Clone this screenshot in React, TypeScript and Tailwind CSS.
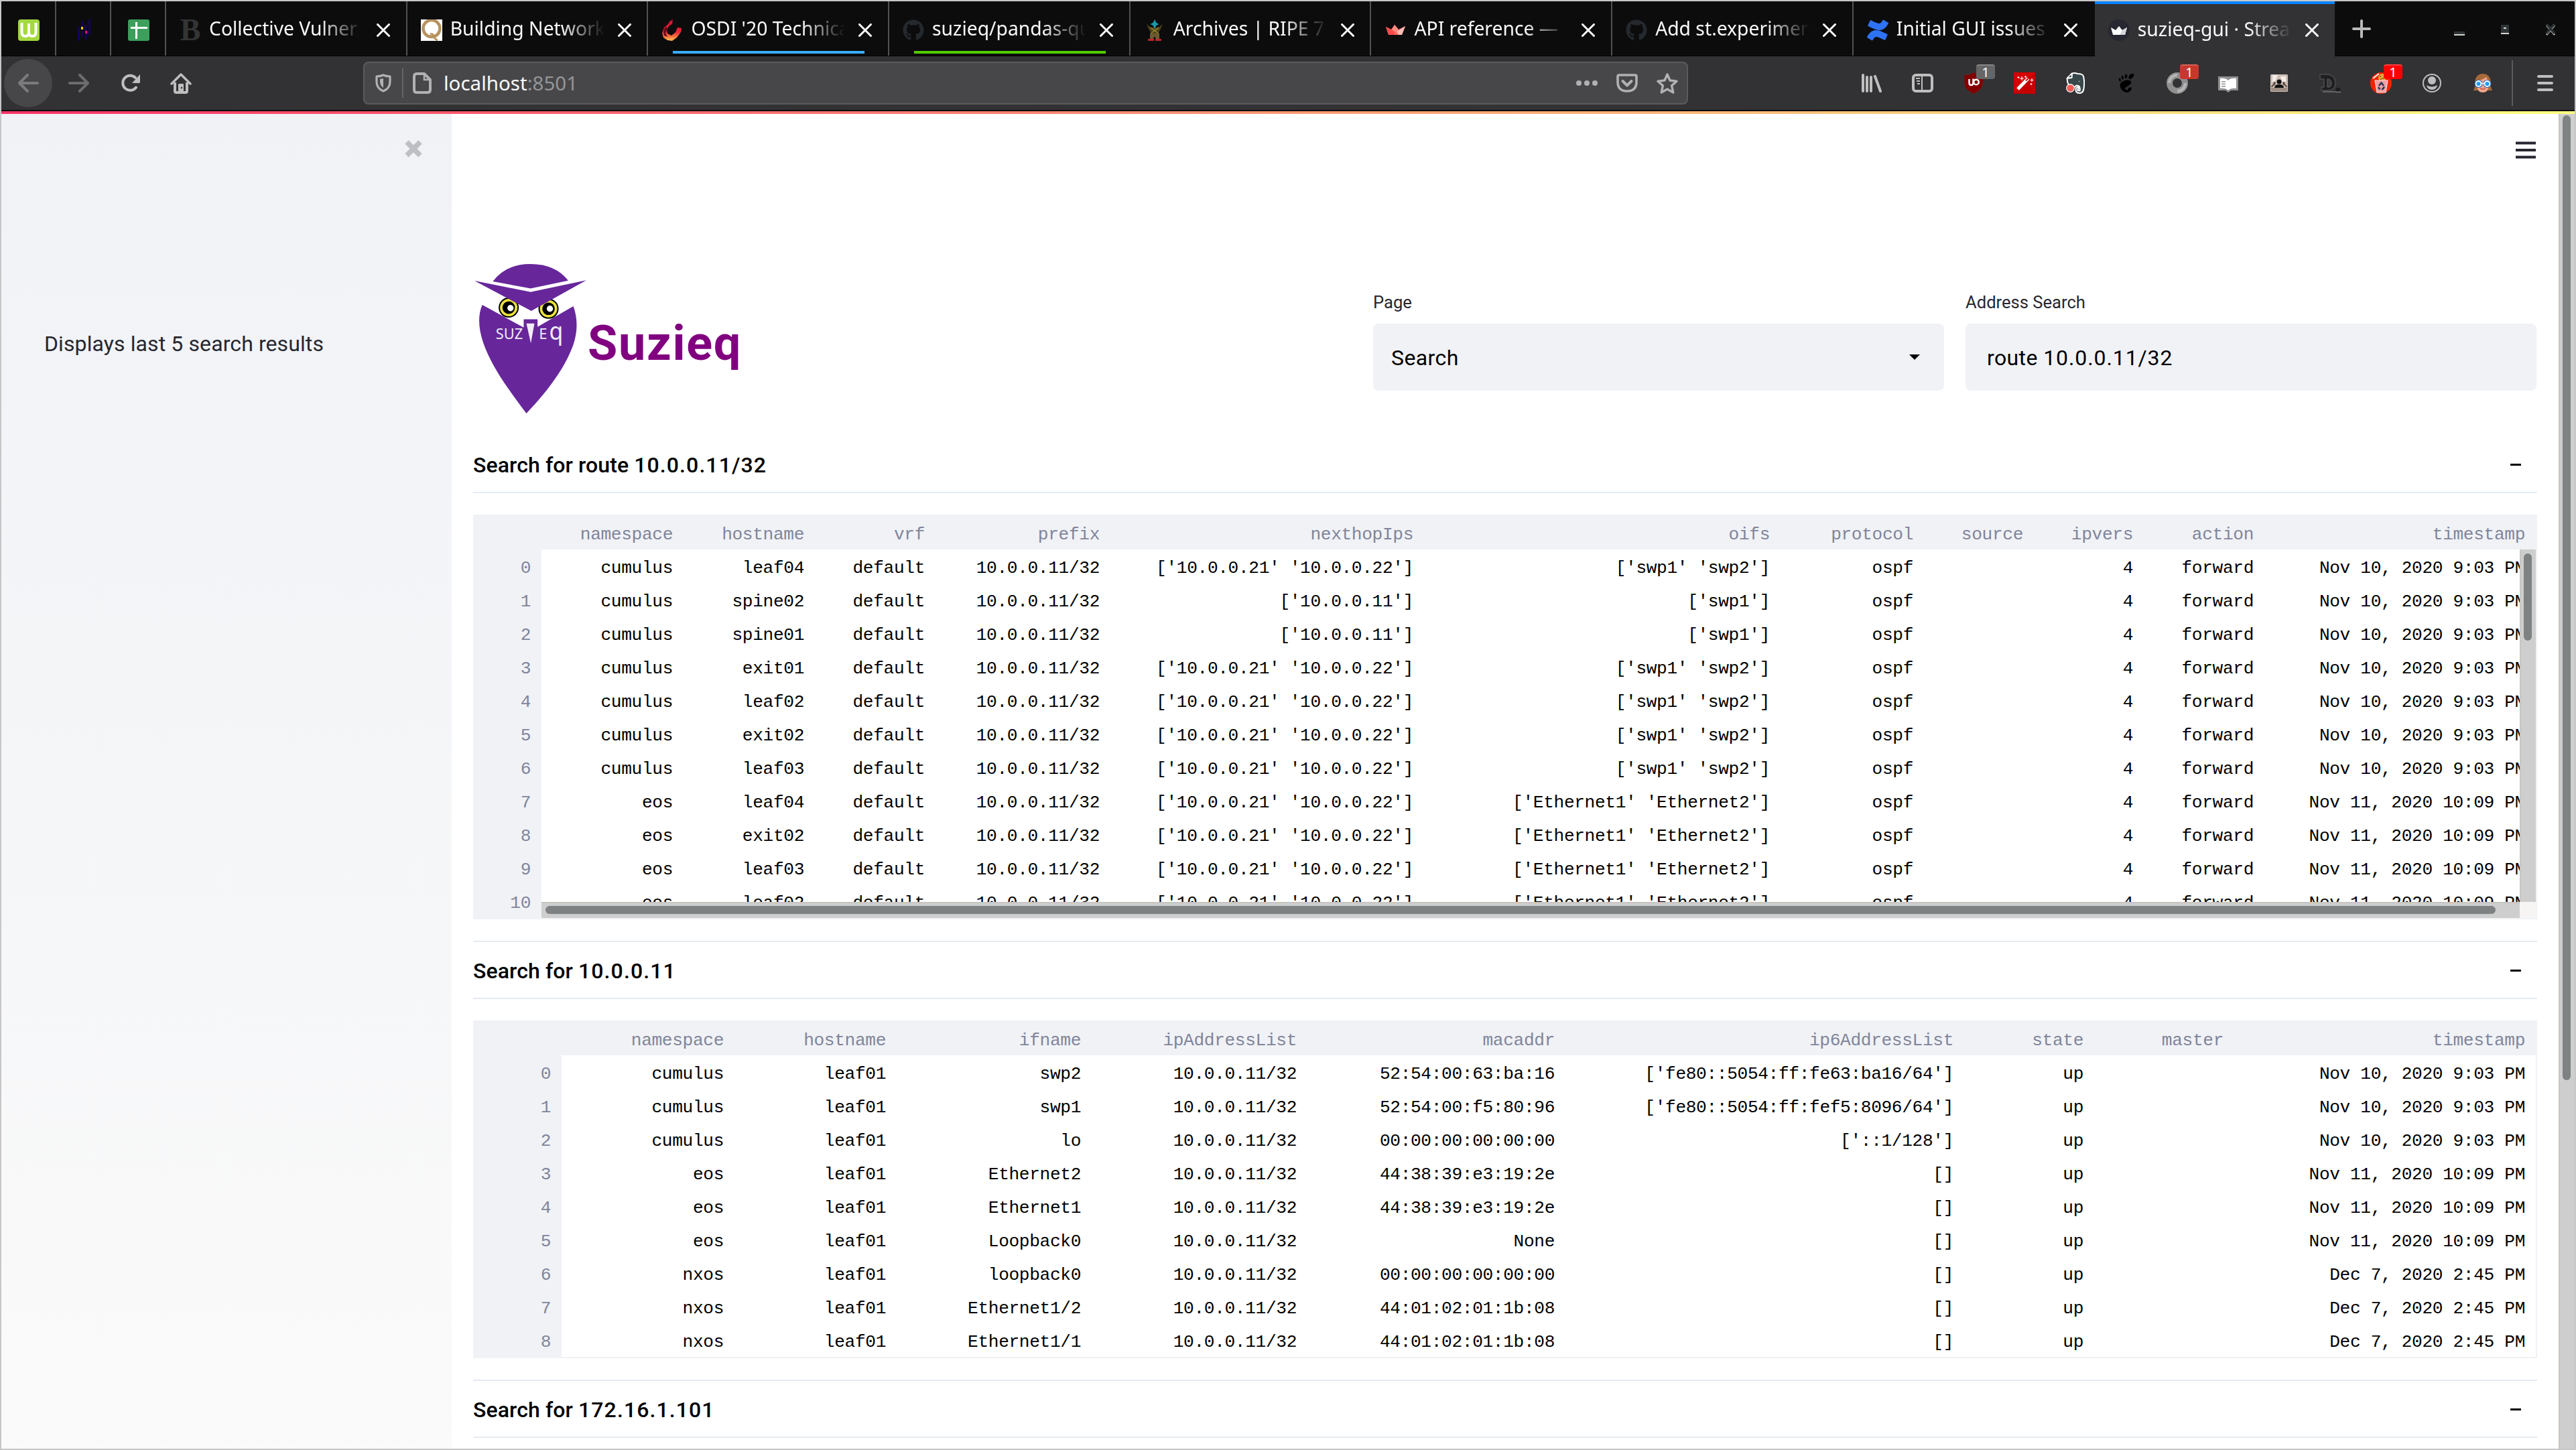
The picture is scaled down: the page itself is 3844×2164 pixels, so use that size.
import type { ReactNode } from "react";
import { FaGithub, FaConfluence } from "react-icons/fa";
import { SiGnome } from "react-icons/si";

/* ---------- favicons ---------- */

const Crown = ({ dark }: { dark?: boolean }) =>
  dark ? (
    <svg viewBox="0 0 32 32" className="size-8">
      <circle cx="16" cy="16" r="16" fill="#262730" />
      <path d="M4 12l7 4 5-6 5 6 7-4-3 11H7z" fill="#fff" />
      <path d="M21 16l7-4-3 11h-8z" fill="#d5d5da" />
    </svg>
  ) : (
    <svg viewBox="0 0 32 32" className="size-8">
      <path d="M2 11l8 4 5-7 6 7 10-5-5 13H6z" fill="#ff6b64" />
      <path d="M2 11l14 7-2 5H6z" fill="#ff4b4b" />
      <path d="M15 8l6 7-5 4-5-4z" fill="#ff8a80" />
      <path d="M31 10l-5 13h-5l-3-5z" fill="#ffbdb5" />
    </svg>
  );

const WikiIcon = () => (
  <svg viewBox="0 0 32 32" className="size-8">
    <rect width="32" height="32" rx="4" fill="#a4d93f" />
    <path d="M5.500 5v14q0 6 5.250 6T16 19V6M16 8v11q0 6 5.250 6t5.250-6V5" fill="none" stroke="#fff" strokeWidth="4" />
  </svg>
);

const PandasIcon = () => (
  <svg viewBox="0 0 32 32" className="size-8">
    <path d="M7 11h3v21H7zM12 2h3v9h-3zM12 17h3v9h-3zM17 8h3v9h-3zM18 21h3v9h-3zM23 0h3v23h-3z" fill="#150458" />
    <path d="M12 11h3v4h-3z" fill="#ffca00" />
    <path d="M18 17h3v4h-3z" fill="#e70488" />
  </svg>
);

const SheetsIcon = () => (
  <svg viewBox="0 0 32 32" className="size-8">
    <rect width="32" height="32" rx="3" fill="#3c9f5c" />
    <path d="M4 12.500h25M12.500 4v25" stroke="#fff" strokeWidth="3" />
  </svg>
);

const LetterB = () => (
  <span className="flex size-8 items-center justify-center font-['Liberation_Serif'] text-[46px] leading-8 font-bold text-[#343434]">B</span>
);

const QIcon = () => (
  <svg viewBox="0 0 32 32" className="size-8">
    <rect width="32" height="32" fill="#fff" />
    <circle cx="16" cy="13.500" r="12.500" fill="none" stroke="#b8935f" strokeWidth="4.500" />
    <path d="M14 22q4-1 5 3t6 6" fill="none" stroke="#b8935f" strokeWidth="3" />
  </svg>
);

const UsenixIcon = () => (
  <svg viewBox="0 0 32 32" className="size-8">
    <defs>
      <linearGradient id="flame" x1="0" y1="0" x2="0" y2="1">
        <stop offset="0" stopColor="#c8102e" />
        <stop offset=".6" stopColor="#ee2737" />
        <stop offset="1" stopColor="#ffc34d" />
      </linearGradient>
    </defs>
    <path d="M17 0l-5 3-2 4-6 5-3 8 2 7 6 4 7 1 7-5 6-8 1-6-6-1-3 7-6 5-6-3-1-6 4-6 4-2z" fill="url(#flame)" />
    <path d="M3 16l4-6 2 4-3 6 3 6-5-2z" fill="#6d0a18" />
  </svg>
);

const ArchiveIcon = () => (
  <svg viewBox="0 0 32 32" className="size-8">
    <path d="M4 7l6 5h12l6-5-4 9-4 6h-8l-4-6z" fill="#4f4419" />
    <path d="M10 12l6 5 6-5M10 21l6-4 6 4" stroke="#9a8434" strokeWidth="1.500" fill="none" />
    <path d="M16 0l2.500 5 4 2-4 2-2.500 5-2.500-5-4-2 4-2z" fill="#1b9aaa" />
    <path d="M9 21h14v8h-5l-2-4-2 4H9z" fill="#6e5a30" />
    <path d="M6 29h9v3H6zM17 29h9v3h-9z" fill="#b8252a" />
  </svg>
);

const GithubIcon = () => <FaGithub className="size-8 text-[#24292e]" />;
const ConfluenceIcon = () => <FaConfluence className="size-8 text-[#2e72f5]" />;

/* ---------- tab strip ---------- */

type TabInfo = { title: string; icon: ReactNode; line?: string };

const tabs: TabInfo[] = [
  { title: "Collective Vulner", icon: <LetterB /> },
  { title: "Building Network", icon: <QIcon /> },
  { title: "OSDI '20 Technica", icon: <UsenixIcon />, line: "bg-[#37adff]" },
  { title: "suzieq/pandas-qu", icon: <GithubIcon />, line: "bg-[#51cd00]" },
  { title: "Archives | RIPE 71", icon: <ArchiveIcon /> },
  { title: "API reference —", icon: <Crown /> },
  { title: "Add st.experimen", icon: <GithubIcon /> },
  { title: "Initial GUI issues -", icon: <ConfluenceIcon /> },
];

const CloseGlyph = () => (
  <svg viewBox="0 0 20 20" className="size-5 shrink-0">
    <path d="M1.500 1.500l17 17M18.500 1.500l-17 17" stroke="#f9f9fa" strokeWidth="3" strokeLinecap="round" />
  </svg>
);

function TabBody({ title, icon }: { title: string; icon: ReactNode }) {
  return (
    <div className="flex h-full items-center pt-1 pl-5">
      <span className="flex size-8 shrink-0 items-center">{icon}</span>
      <span className="mt-[-5px] ml-3 w-[230px] shrink-0 overflow-hidden text-[28.3px] leading-[44px] whitespace-nowrap text-[#f9f9fa] [mask-image:linear-gradient(to_right,black_72%,transparent_100%)]">
        {title}
      </span>
      <span className="ml-5 flex">
        <CloseGlyph />
      </span>
    </div>
  );
}

function TabStrip() {
  return (
    <div className="flex h-[82px] shrink-0 border-b border-black bg-[#0c0c0d] font-['Noto_Sans',sans-serif]">
      {[<WikiIcon key="w" />, <PandasIcon key="p" />, <SheetsIcon key="s" />].map((icon, i) => (
        <div key={i} className="flex w-[82px] items-center justify-center border-r-2 border-[#515154] pt-1 pl-px">
          {icon}
        </div>
      ))}
      {tabs.map((t, i) => (
        <div key={t.title} className={i === 7 ? "w-[360px]" : "w-[359.700px] border-r-2 border-[#515154]"}>
          <div className="relative h-full">
            <TabBody title={t.title} icon={t.icon} />
            {t.line && <div className={`absolute bottom-[3px] left-[37px] h-1 w-[286px] ${t.line}`} />}
          </div>
        </div>
      ))}
      <div className="h-[82px] w-[358px] border-t-4 border-[#0a84ff] bg-[#323234] pb-1">
        <TabBody title="suzieq-gui · Strea" icon={<Crown dark />} />
      </div>
      <svg viewBox="0 0 28 28" className="mt-[27px] ml-[26px] size-7">
        <path d="M14 2v24M2 14h24" stroke="#b9b9ba" strokeWidth="4" strokeLinecap="round" />
      </svg>
      <svg viewBox="0 0 16 6" className="mt-[45px] ml-[124px] h-1.5 w-4">
        <path d="M0 0h16v4H0z" fill="#2e3436" />
        <path d="M0 4h16v2H0z" fill="#d3d7cf" />
      </svg>
      <svg viewBox="0 0 12 14" className="mt-[35px] ml-[54px] h-[14px] w-3">
        <path d="M0 0h12v12H0z" fill="#2e3436" />
        <path d="M0 12h12v2H0zM4 4h4v2H4z" fill="#d3d7cf" />
      </svg>
      <svg viewBox="0 0 16 18" className="mt-[33px] ml-[54px] h-[18px] w-4">
        <path d="M2 3l12 14M14 3L2 17" stroke="#d3d7cf" strokeWidth="2.500" />
        <path d="M2 1l12 14M14 1L2 15" stroke="#2e3436" strokeWidth="3.500" />
      </svg>
    </div>
  );
}

/* ---------- toolbar ---------- */

const LibraryIcon = () => (
  <svg viewBox="0 0 30 28" className="h-7 w-[30px]">
    <path d="M2 2v24M8 5v21M14 5v21M20 4l8 22" stroke="#bebebf" strokeWidth="4" strokeLinecap="round" />
  </svg>
);

const SidebarIcon = () => (
  <svg viewBox="0 0 32 28" className="h-7 w-8">
    <rect x="2" y="2" width="28" height="24" rx="4" fill="none" stroke="#bebebf" strokeWidth="4" />
    <path d="M15 3v22" stroke="#bebebf" strokeWidth="2" />
    <path d="M6 7h6M7 11h5M8 15h4" stroke="#bebebf" strokeWidth="2" />
  </svg>
);

const UblockIcon = () => (
  <svg viewBox="0 0 28 32" className="h-8 w-7">
    <path d="M14 0q6 4 14 4v11q0 11-14 17Q0 26 0 15V4q8 0 14-4z" fill="#800000" stroke="#5d3434" strokeWidth=".6" />
    <path d="M7.500 10v5.500q0 3.500 3 3.500t3-3.500V9.500" fill="none" stroke="#fff" strokeWidth="2.500" />
    <circle cx="18" cy="14.500" r="3.800" fill="none" stroke="#fff" strokeWidth="2.500" />
  </svg>
);

const WandIcon = () => (
  <svg viewBox="0 0 32 32" className="size-8">
    <rect width="32" height="32" rx="1.500" fill="#c40000" />
    <path d="M0 0h32L0 32z" fill="#d60000" />
    <path d="M6 25L21.500 9" stroke="#fff" strokeWidth="5" />
    <path d="M18 12.500L21.500 9" stroke="#d00000" strokeWidth="2" />
    <path d="M12 6v6M9 9h6M17.500 5v3M16 6.500h3M27 9v5M24.500 11.500h5M7 6v3M5.500 7.500h3M26 16v3M24.500 17.500h3" stroke="#fff" strokeWidth="1.200" />
  </svg>
);

const EvernoteIcon = () => (
  <svg viewBox="0 0 28 32" className="h-8 w-7">
    <path
      d="M9 1.500q5-1 8 .5 8 0 9 4 2 8 .5 18-1 7-6 7-6 0-6-5 0-4 4-4v3q-1.500 0-1 2l3 .5q1-4-1-7l-4-1q-2 3-6 2.500Q2 21 1.500 9L8.500 8z"
      fill="#37474a"
      stroke="#fff"
      strokeWidth="2"
      strokeLinejoin="round"
    />
    <path d="M2 8l6.500-6.500V8z" fill="#37474a" stroke="#fff" strokeWidth="1.500" strokeLinejoin="round" />
    <path d="M18 13.500q1.500-1.500 3.500 0z" fill="#fff" />
    <circle cx="6.500" cy="23.500" r="5.800" fill="#f25c54" stroke="#fff" strokeWidth="1.200" />
  </svg>
);

const RingIcon = () => (
  <svg viewBox="0 0 32 32" className="size-8">
    <circle cx="16" cy="16" r="11.500" fill="none" stroke="#8f8f8f" strokeWidth="9" />
    <path d="M4 16a12 12 0 0 1 12-12M28 16a12 12 0 0 1-12 12" fill="none" stroke="#b4b4b4" strokeWidth="4" />
  </svg>
);

const BookIcon = () => (
  <svg viewBox="0 0 32 26" className="mt-1 h-[26px] w-8">
    <path d="M1 1h30v21H20l-4 3-4-3H1z" fill="#8f8f8f" />
    <path d="M4 4q8-1 12 3 4-4 12-3v15q-8-1-12 3-4-4-12-3z" fill="#fff" />
    <path d="M6 9h6M6 12.500h6M6 16h6" stroke="#8f8f8f" strokeWidth="1.500" />
  </svg>
);

const PeopleIcon = () => (
  <svg viewBox="0 0 26 26" className="size-[26px]">
    <rect width="26" height="26" rx="1.500" fill="#cdbfb6" />
    <path d="M3 1h8l-3 8-5 3zM15 3h8v8h-5z" fill="#f2ece7" />
    <path d="M1 20h24v5H1z" fill="#9d8c82" />
    <circle cx="13" cy="11" r="3.500" fill="#111" />
    <path d="M6 20q0-5 7-5t7 5z" fill="#111" />
    <circle cx="6" cy="13" r="1.800" fill="#55453c" />
    <circle cx="20" cy="13" r="1.800" fill="#55453c" />
    <path d="M2 19q1-4 5-4M24 19q-1-4-5-4" stroke="#55453c" strokeWidth="2" fill="none" />
  </svg>
);

const DisconnectIcon = () => (
  <svg viewBox="0 0 32 30" className="h-[30px] w-8">
    <path d="M1 2h9q14 0 14 13 0 11-12 11H3v-5h4V9H1z" fill="#1f1f20" stroke="#4c4c4e" strokeWidth="1.500" />
    <path d="M12 9q6 0 6 6.500T12 21z" fill="#3c3c3e" stroke="#606062" />
    <path d="M25 22h6v5h-6z" fill="#1d1d1e" />
    <path d="M5 28h20M25 28.500h7" stroke="#77777a" strokeWidth="1.500" />
  </svg>
);

const CookieBinIcon = () => (
  <svg viewBox="0 0 32 32" className="size-8">
    <circle cx="16" cy="16" r="16" fill="#f52200" />
    <path d="M4 9l9-7" stroke="#fff" strokeWidth="2" />
    <circle cx="18" cy="8" r="6" fill="#e2a93a" />
    <path d="M14 6h2M18 9h2M20 5h2M15 10h2" stroke="#7a4a12" strokeWidth="1.500" />
    <path d="M7 12h19l-3 18H10z" fill="#f3a0a0" stroke="#fbd9d9" strokeWidth="1.200" />
    <path d="M13 20l3.500-4.500L20 20M21 21.500L18.500 25H17M12 22l2.500 3.500" fill="none" stroke="#23395b" strokeWidth="2.500" />
  </svg>
);

const AccountIcon = () => (
  <svg viewBox="0 0 28 28" className="size-7">
    <circle cx="14" cy="14" r="13" fill="none" stroke="#bebebf" strokeWidth="2" />
    <circle cx="14" cy="10" r="6" fill="#bebebf" />
    <path d="M6 17q8 5 16 0-1 7-8 7t-8-7z" fill="#bebebf" />
  </svg>
);

const FaceIcon = () => (
  <svg viewBox="0 0 28 28" className="size-7">
    <path d="M0 25q3-5 2-13Q4 0 14 0t12 12q-1 8 2 13z" fill="#a86a3a" />
    <path d="M5 10q8 0 14-5 2 4 4 5v8q-1 10-9 10T5 18z" fill="#f0a58c" />
    <path d="M10 22q4 2 8 0" stroke="#c4574f" strokeWidth="1.500" fill="none" />
    <circle cx="7.500" cy="15" r="6" fill="#1560b8" />
    <circle cx="20.500" cy="15" r="6" fill="#1560b8" />
    <circle cx="7.500" cy="15" r="4" fill="#1e9bff" stroke="#fff" strokeWidth="1.800" />
    <circle cx="20.500" cy="15" r="4" fill="#1e9bff" stroke="#fff" strokeWidth="1.800" />
    <path d="M12 14.500h4" stroke="#fff" strokeWidth="1.500" />
  </svg>
);

const extensions: { icon: ReactNode; badge?: string }[] = [
  { icon: <LibraryIcon /> },
  { icon: <SidebarIcon /> },
  { icon: <UblockIcon />, badge: "bg-[#666666] border-t-[#858585]" },
  { icon: <WandIcon /> },
  { icon: <EvernoteIcon /> },
  { icon: <SiGnome className="size-7 text-black" /> },
  { icon: <RingIcon />, badge: "bg-[#c8372b] border-t-[#d55f55]" },
  { icon: <BookIcon /> },
  { icon: <PeopleIcon /> },
  { icon: <DisconnectIcon /> },
  { icon: <CookieBinIcon />, badge: "bg-[#ff0000] border-t-[#ff4040]" },
  { icon: <AccountIcon /> },
  { icon: <FaceIcon /> },
];

function Toolbar() {
  return (
    <div className="flex h-20 shrink-0 items-center bg-[#323234] font-['Noto_Sans',sans-serif]">
      <div className="ml-1 flex size-[72px] shrink-0 items-center justify-center rounded-full bg-[#474749]">
        <svg viewBox="0 0 32 28" className="h-7 w-8">
          <path d="M15 2L3 14l12 12M3 14h27" fill="none" stroke="#7b7b7d" strokeWidth="4" strokeLinecap="round" strokeLinejoin="round" />
        </svg>
      </div>
      <svg viewBox="0 0 32 28" className="ml-6 h-7 w-8 shrink-0">
        <path d="M17 2l12 12-12 12M29 14H2" fill="none" stroke="#6c6c6e" strokeWidth="4" strokeLinecap="round" strokeLinejoin="round" />
      </svg>
      <svg viewBox="0 0 30 28" className="ml-[46px] h-7 w-[30px] shrink-0">
        <path d="M22 20.500A11 11 0 1 1 21 6" transform="translate(1 0)" fill="none" stroke="#bebebf" strokeWidth="4" strokeLinecap="round" />
        <path d="M29 1v11.500q0 1.500-1.500 1.500H17z" fill="#bebebf" />
      </svg>
      <svg viewBox="0 0 32 32" className="ml-[44px] size-8 shrink-0">
        <path d="M2 17L16 3l14 14" fill="none" stroke="#bebebf" strokeWidth="3.500" strokeLinecap="round" strokeLinejoin="round" />
        <path d="M7 15v13q0 2 2 2h14q2 0 2-2V15" fill="none" stroke="#bebebf" strokeWidth="4" />
        <path d="M12 18q0-1 1-1h6q1 0 1 1v12h-8z" fill="#bebebf" />
        <circle cx="17" cy="23" r="1.300" fill="#323234" />
      </svg>

      <div className="ml-[256px] flex h-16 w-[1977px] shrink-0 items-center rounded-lg border-2 border-[#5b5b5d] bg-[#474749]">
        <svg viewBox="0 0 24 28" className="ml-4 h-7 w-6">
          <path d="M12 2q4 2 10 2v8q0 10-10 14Q2 22 2 12V4q6 0 10-2z" fill="none" stroke="#b1b1b3" strokeWidth="3.200" strokeLinejoin="round" />
          <path d="M12 7v14q-5-3-5-10V8z" fill="#b1b1b3" />
        </svg>
        <div className="ml-[16px] h-11 w-0.5 bg-[#66666a]" />
        <svg viewBox="0 0 28 32" className="ml-[14px] h-8 w-7">
          <path d="M6 2h11l9 9v15q0 4-4 4H6q-4 0-4-4V6q0-4 4-4z" fill="none" stroke="#b1b1b3" strokeWidth="4" strokeLinejoin="round" />
          <path d="M17 3v8h8" fill="none" stroke="#b1b1b3" strokeWidth="2.500" />
        </svg>
        <span className="ml-[18px] text-[29.500px] leading-[44px] text-[#f9f9fa]">
          localhost<span className="text-[#959596]">:8501</span>
        </span>
        <svg viewBox="0 0 32 8" className="ml-auto h-2 w-8">
          <circle cx="4" cy="4" r="4" fill="#b1b1b3" />
          <circle cx="16" cy="4" r="4" fill="#b1b1b3" />
          <circle cx="28" cy="4" r="4" fill="#b1b1b3" />
        </svg>
        <svg viewBox="0 0 32 28" className="ml-7 h-7 w-8">
          <path d="M4 2h24q2 0 2 2v8q0 14-14 14T2 12V4q0-2 2-2z" fill="none" stroke="#b1b1b3" strokeWidth="3.600" />
          <path d="M9.500 11l6.500 6.500 6.500-6.500" fill="none" stroke="#b1b1b3" strokeWidth="4" strokeLinecap="round" strokeLinejoin="round" />
        </svg>
        <svg viewBox="0 0 32 32" className="mr-[13px] ml-7 size-8">
          <path d="M16 3l4 9 10 1.200-7.400 6.600L24.800 30 16 25l-8.800 5 2.200-10.200L2 13.200 12 12z" fill="none" stroke="#b1b1b3" strokeWidth="3.400" strokeLinejoin="round" />
        </svg>
      </div>

      <div className="ml-[236px] flex h-full">
        {extensions.map((e, i) => (
          <div key={i} className="relative flex h-full w-[76px] items-center justify-center">
            {e.icon}
            {e.badge && (
              <span className={`absolute top-3 left-[42px] flex h-[22px] w-7 items-center justify-center rounded-[4px] border-t-2 text-[20px] leading-[20px] text-white ${e.badge}`}>
                1
              </span>
            )}
          </div>
        ))}
      </div>
      <div className="ml-[5px] h-[68px] w-0.5 bg-[#5b5b5d]" />
      <svg viewBox="0 0 24 24" className="ml-9 size-6">
        <path d="M2 2h20M2 12h20M2 22h20" stroke="#bebebf" strokeWidth="4" strokeLinecap="round" />
      </svg>
    </div>
  );
}

/* ---------- page content ---------- */

const Owl = () => (
  <svg viewBox="86 72 500 668" className="h-[223px] w-[167px]">
    <path d="M168 150Q225 72 336 72t169 74L337 181z" fill="#67279b" />
    <g>
      <circle cx="239" cy="267" r="42" fill="#ece33a" stroke="#000" strokeWidth="6" />
      <circle cx="239" cy="267" r="28" fill="#000" />
      <circle cx="247" cy="269" r="14" fill="#fff" />
      <circle cx="417" cy="272" r="42" fill="#ece33a" stroke="#000" strokeWidth="6" />
      <circle cx="417" cy="272" r="28" fill="#000" />
      <circle cx="423" cy="272" r="14" fill="#fff" />
    </g>
    <path d="M86 147L337 197 586 145 340 282z" fill="#67279b" />
    <path d="M121 255L306 356V319H368V353L528 261C550 322 548 388 518 458C478 555 400 655 318 740C240 635 176 550 135 450C104 375 98 305 121 255z" fill="#67279b" />
    <path d="M318 338h36l-16 88z" fill="#f2edf7" />
    <text x="181" y="408" fontSize="66" fill="#f2edf7" fontFamily="Noto Sans" textLength="121" lengthAdjust="spacingAndGlyphs">SUZ</text>
    <text x="374" y="408" fontSize="66" fill="#f2edf7" fontFamily="Noto Sans">E</text>
    <text x="420" y="412" fontSize="108" fill="#f2edf7" fontFamily="Noto Sans" textLength="62" lengthAdjust="spacingAndGlyphs">q</text>
  </svg>
);

const GRID1 = "grid-cols-[102px_212px_196px_180px_261px_468px_532px_214px_164px_164px_180px_405px]";
const GRID2 = "grid-cols-[132px_258px_242px_291px_322px_385px_595px_194px_209px_450px]";

const head1 = ["namespace", "hostname", "vrf", "prefix", "nexthopIps", "oifs", "protocol", "source", "ipvers", "action", "timestamp"];
const both = "['10.0.0.21' '10.0.0.22']";
const route = (ns: string, host: string, hops: string, oifs: string, ts: string) => [
  ns, host, "default", "10.0.0.11/32", hops, oifs, "ospf", "", "4", "forward", ts,
];
const T1 = "Nov 10, 2020 9:03 PM";
const T2 = "Nov 11, 2020 10:09 PM";
const T3 = "Dec 7, 2020 2:45 PM";
const swp = "['swp1' 'swp2']";
const eth = "['Ethernet1' 'Ethernet2']";
const rows1 = [
  route("cumulus", "leaf04", both, swp, T1),
  route("cumulus", "spine02", "['10.0.0.11']", "['swp1']", T1),
  route("cumulus", "spine01", "['10.0.0.11']", "['swp1']", T1),
  route("cumulus", "exit01", both, swp, T1),
  route("cumulus", "leaf02", both, swp, T1),
  route("cumulus", "exit02", both, swp, T1),
  route("cumulus", "leaf03", both, swp, T1),
  route("eos", "leaf04", both, eth, T2),
  route("eos", "exit02", both, eth, T2),
  route("eos", "leaf03", both, eth, T2),
  route("eos", "leaf02", both, eth, T2),
];

const head2 = ["namespace", "hostname", "ifname", "ipAddressList", "macaddr", "ip6AddressList", "state", "master", "timestamp"];
const addr = (ns: string, ifname: string, mac: string, ip6: string, ts: string) => [
  ns, "leaf01", ifname, "10.0.0.11/32", mac, ip6, "up", "", ts,
];
const rows2 = [
  addr("cumulus", "swp2", "52:54:00:63:ba:16", "['fe80::5054:ff:fe63:ba16/64']", T1),
  addr("cumulus", "swp1", "52:54:00:f5:80:96", "['fe80::5054:ff:fef5:8096/64']", T1),
  addr("cumulus", "lo", "00:00:00:00:00:00", "['::1/128']", T1),
  addr("eos", "Ethernet2", "44:38:39:e3:19:2e", "[]", T2),
  addr("eos", "Ethernet1", "44:38:39:e3:19:2e", "[]", T2),
  addr("eos", "Loopback0", "None", "[]", T2),
  addr("nxos", "loopback0", "00:00:00:00:00:00", "[]", T3),
  addr("nxos", "Ethernet1/2", "44:01:02:01:1b:08", "[]", T3),
  addr("nxos", "Ethernet1/1", "44:01:02:01:1b:08", "[]", T3),
];

const cell = "h-[50px] pr-4 text-right leading-[56px] whitespace-pre";

function Rows({ grid, head, rows }: { grid: string; head: string[]; rows: string[][] }) {
  return (
    <>
      <div className={`grid shrink-0 bg-[#f0f2f6] pt-0.5 text-[#81859a] ${grid}`}>
        <div />
        {head.map((h) => (
          <div key={h} className={cell}>{h}</div>
        ))}
      </div>
      {rows.map((r, i) => (
        <div key={i} className={`grid shrink-0 ${grid}`}>
          <div className={`${cell} bg-[#f0f2f6] text-[#81859a]`}>{i}</div>
          {r.map((v, j) => (
            <div key={j} className={cell}>{v}</div>
          ))}
        </div>
      ))}
    </>
  );
}

function Title({ text, target }: { text: string; target: string }) {
  return (
    <div className="flex h-[85px] shrink-0 items-center justify-between border-b-2 border-[#e6eaf1] pt-0.5 pr-6 text-[32px] leading-[48px] font-medium text-black">
      <span className="tracking-[0.1px] whitespace-pre">
        {text}
        <span className="tracking-[1.1px]">{target}</span>
      </span>
      <span className="h-[3px] w-4 bg-black" />
    </div>
  );
}

export default function App() {
  return (
    <div className="flex h-[2164px] w-[3844px] flex-col overflow-hidden border-2 border-[#c6c6c6] bg-white font-['Roboto',sans-serif] text-black">
      <TabStrip />
      <Toolbar />
      <div className="h-0.5 shrink-0 bg-[#0c0c0d]" />
      <div className="h-1 shrink-0 bg-[linear-gradient(to_right,#f63366,#fffd80)]" />
      <div className="flex min-h-0 flex-1">
        <aside className="flex w-[672px] shrink-0 flex-col bg-[linear-gradient(180deg,#f0f2f6,#fafafa)]">
          <svg viewBox="0 0 28 28" className="mt-[38px] mr-[43px] size-7 self-end">
            <path d="M4 4l20 20M24 4L4 24" stroke="#bdbfc4" strokeWidth="7.500" />
          </svg>
          <p className="mt-[253px] pl-16 text-[32px] leading-[48px] tracking-[0.1px] text-[#262730]">Displays last 5 search results</p>
        </aside>

        <main className="relative flex min-w-0 flex-1 flex-col overflow-hidden px-8">
          <svg viewBox="0 0 30 26" className="absolute top-[41px] right-[34px] h-[26px] w-[30px]">
            <path d="M0 2.500h30M0 13h30M0 23.500h30" stroke="#262730" strokeWidth="4" />
          </svg>

          <div className="flex h-[481px] shrink-0 pt-[224px]">
            <div className="flex w-[1343px] pl-0.5">
              <Owl />
              <h1 className="mt-[71px] ml-[2px] text-[72px] leading-[96px] font-bold tracking-[1.7px] text-[#800080]">Suzieq</h1>
            </div>
            <div className="w-[852px] pt-[41px]">
              <div className="h-[48px] text-[25.600px] leading-[32px] text-[#262730]">Page</div>
              <div className="flex h-[100px] items-center justify-between rounded-lg bg-[#f0f2f6] pr-9 pl-[27px] text-[32px]">
                <span className="pt-0.5 tracking-[0.4px]">Search</span>
                <svg viewBox="0 0 16 8" className="h-2 w-4">
                  <path d="M0 0h16L8 8z" fill="#000" />
                </svg>
              </div>
            </div>
            <div className="ml-8 w-[852px] pt-[41px]">
              <div className="h-[48px] text-[25.600px] leading-[32px] text-[#262730]">Address Search</div>
              <div className="flex h-[100px] items-center rounded-lg bg-[#f0f2f6] pl-8 text-[32px]">
                <span className="pt-0.5 tracking-[0.4px] whitespace-pre">
                  route <span className="tracking-[0.9px]">10.0.0.11/32</span>
                </span>
              </div>
            </div>
          </div>

          <Title text="Search for route " target="10.0.0.11/32" />
          <div className="relative my-8 flex h-[604px] shrink-0 flex-col overflow-hidden border-r-2 border-b-2 border-[#f0f2f6] font-['Liberation_Mono',monospace] text-[26.200px] tracking-[-0.36px]">
            <Rows grid={GRID1} head={head1} rows={rows1} />
            <div className="absolute right-6 bottom-0 left-[102px] h-6 border-t-2 border-[#c9c5c1] bg-[#cecece] pt-1 pr-9 pl-1.5">
              <div className="h-3 rounded-full bg-[#7e8282]" />
            </div>
            <div className="absolute top-[52px] right-0 bottom-6 w-6 border-l-2 border-[#c9c5c1] bg-[#cecece] pt-1.5 pl-1">
              <div className="h-[130px] w-3 rounded-full bg-[#7e8282]" />
            </div>
            <div className="absolute right-0 bottom-0 size-6 bg-[#f6f5f4]" />
          </div>

          <div className="h-0.5 shrink-0 bg-[#e6eaf1]" />
          <Title text="Search for " target="10.0.0.11" />
          <div className="my-8 flex h-[504px] shrink-0 flex-col border-r-2 border-b-2 border-[#f0f2f6] font-['Liberation_Mono',monospace] text-[26.200px] tracking-[-0.36px]">
            <Rows grid={GRID2} head={head2} rows={rows2} />
          </div>

          <div className="h-0.5 shrink-0 bg-[#e6eaf1]" />
          <Title text="Search for " target="172.16.1.101" />
        </main>

        <div className="w-6 shrink-0 border-l-2 border-[#c9c5c1] bg-[#cecece] pt-0.5 pl-1">
          <div className="h-[1440px] w-3 rounded-full bg-[#7e8282]" />
        </div>
      </div>
    </div>
  );
}
